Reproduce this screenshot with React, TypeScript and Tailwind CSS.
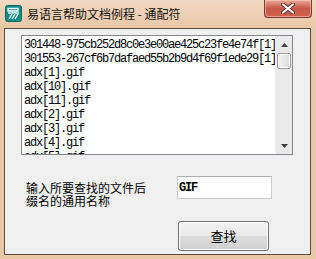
import React from "react";

const lines = [
  "301448-975cb252d8c0e3e00ae425c23fe4e74f[1]",
  "301553-267cf6b7dafaed55b2b9d4f69f1ede29[1]",
  "adx[1].gif",
  "adx[10].gif",
  "adx[11].gif",
  "adx[2].gif",
  "adx[3].gif",
  "adx[4].gif",
  "adx[5].gif",
];

const cjk = { fontFamily: '"Noto Sans CJK SC", "Noto Sans", sans-serif' };
const mono = { fontFamily: '"Liberation Mono", "Noto Sans CJK SC", monospace' };

function AppIcon() {
  return (
    <svg width="17" height="17" viewBox="0 0 17 17">
      <rect x="0.5" y="0.5" width="16" height="16" rx="2" fill="#138a86" stroke="#0c6b68" />
      <path d="M3 3.5 H13 V6 H3 Z" fill="none" stroke="#fff" strokeWidth="1.3" />
      <path d="M3 8 H14" stroke="#fff" strokeWidth="1.3" />
      <path d="M4 14 L7 9 M7 14 L10 9 M10 14 L13 9" stroke="#fff" strokeWidth="1.3" />
    </svg>
  );
}

function CloseButton() {
  return (
    <div className="w-[48px] h-[18px] rounded-b-[4px] border border-t-0 border-[#7a3a2e] bg-gradient-to-b from-[#e9a999] via-[#c9584a] to-[#d0624f] flex items-center justify-center shadow-[inset_0_0_0_1px_rgba(255,220,210,0.5)]">
      <svg width="14" height="11" viewBox="0 0 14 11">
        <path
          d="M2 1.5 L7 5.5 L12 1.5 M2 9.5 L7 5.5 L12 9.5"
          stroke="#5a2a22"
          strokeWidth="4"
          strokeLinecap="round"
          fill="none"
        />
        <path
          d="M2 1.5 L7 5.5 L12 1.5 M2 9.5 L7 5.5 L12 9.5"
          stroke="#ffffff"
          strokeWidth="2.2"
          strokeLinecap="round"
          fill="none"
        />
      </svg>
    </div>
  );
}

function ScrollBar() {
  return (
    <div className="w-[17px] h-full bg-[#eaeaea] flex flex-col border-l border-[#f0f0f0]">
      <div className="h-[17px] flex items-center justify-center">
        <svg width="7" height="4" viewBox="0 0 7 4">
          <path d="M0 4 L3.5 0 L7 4 Z" fill="#404040" />
        </svg>
      </div>
      <div className="mx-[1px] h-[16px] rounded-[2px] border border-[#9a9a9a] bg-gradient-to-r from-[#f4f4f4] to-[#dcdcdc] shadow-[inset_0_0_0_1px_#ffffff]" />
      <div className="flex-1" />
      <div className="h-[17px] flex items-center justify-center">
        <svg width="7" height="4" viewBox="0 0 7 4">
          <path d="M0 0 L7 0 L3.5 4 Z" fill="#404040" />
        </svg>
      </div>
    </div>
  );
}

export default function App() {
  return (
    <div className="w-[316px] h-[259px] bg-[#eac7a6] flex flex-col overflow-hidden">
      <div className="h-[28px] flex items-start bg-gradient-to-b from-[#f2d9c2] to-[#eac7a6]">
        <div className="ml-[5px] mt-[5px]">
          <AppIcon />
        </div>
        <div className="ml-[5px] mt-[5px] text-[12px] leading-[18px] text-[#111]" style={cjk}>
          易语言帮助文档例程 - 通配符
        </div>
        <div className="ml-auto mr-[4px]">
          <CloseButton />
        </div>
      </div>
      <div className="ml-[4px] mr-[5px] h-[227px] border border-[#5b4d44] bg-[#f0f0f0] flex flex-col">
        <div className="ml-[16px] mt-[6px] w-[272px] h-[120px] border border-[#828790] bg-white flex">
          <div className="flex-1 overflow-hidden pl-[2px] pt-[2px]">
            {lines.map((l) => (
              <div
                key={l}
                className="h-[14px] leading-[14px] text-[12px] tracking-[-1.2px] text-black whitespace-nowrap"
                style={mono}
              >
                {l}
              </div>
            ))}
          </div>
          <ScrollBar />
        </div>
        <div className="flex mt-[21px]">
          <div className="ml-[21px] w-[151px] pt-[5px] text-[12px] leading-[13px] text-black" style={cjk}>
            <div>输入所要查找的文件后</div>
            <div>缀名的通用名称</div>
          </div>
          <div className="w-[95px] h-[23px] border border-[#c9ccd3] border-t-[#abadb3] bg-white flex items-center pl-[1px]">
            <span className="text-[12px] tracking-[-1.2px] font-semibold text-black" style={mono}>
              GIF
            </span>
          </div>
        </div>
        <div className="flex mt-[14px]">
          <button className="ml-[173px] w-[91px] h-[30px] rounded-[3px] border border-[#707070] bg-[linear-gradient(to_bottom,#f2f2f2_0%,#ebebeb_50%,#dddddd_50%,#cfcfcf_100%)] shadow-[inset_0_0_0_1px_#fcfcfc] flex items-center justify-center text-[13px] text-black" style={cjk}>
            查找
          </button>
        </div>
      </div>
    </div>
  );
}
